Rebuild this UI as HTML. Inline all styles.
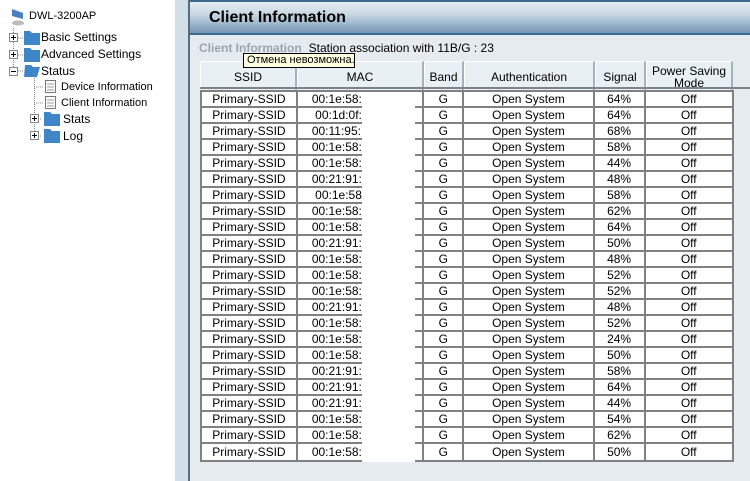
<!DOCTYPE html>
<html><head><meta charset="utf-8"><style>
*{margin:0;padding:0;box-sizing:border-box}
body{width:750px;height:481px;overflow:hidden;background:#fff;font-family:"Liberation Sans",Arial,sans-serif;position:relative}
.nav{position:absolute;left:0;top:0;width:175px;height:481px;background:#fff;font-size:12px;color:#000}
.nav div{position:absolute;white-space:nowrap}
.strip{position:absolute;left:175px;top:0;width:13px;height:481px;background:#d3dfe8}
.vline{position:absolute;left:188px;top:0;width:2px;height:481px;background:#5a6b7b}
.main{position:absolute;left:190px;top:0;width:560px;height:481px;background:#e6ebef}
.hdr{position:absolute;left:0;top:0;width:560px;height:35px;border-top:2px solid #3d6a90;border-bottom:2px solid #3d6a90;background:linear-gradient(#e6edf2,#c8d7e3 40%,#7397b7)}
.hdr span{position:absolute;left:19px;top:7px;font-size:16px;font-weight:bold;color:#000}
.sub{position:absolute;left:9px;top:41px;font-size:12px;color:#000;white-space:nowrap}
.sub b{font-weight:bold;color:#9aa6ae;margin-right:7px}
.th{position:absolute;top:61px;height:31px;background:#e8f0f4;border:1px solid #fff;border-right:2px solid #a6b1b8;border-bottom:1px solid #a6b1b8;font-size:12px;text-align:center;display:flex;align-items:center;justify-content:center;line-height:12px}
.hl{position:absolute;left:10px;top:87px;width:550px;height:2px;background:#7d8488}
table{position:absolute;left:10px;top:90px;width:534px;border-collapse:separate;border-spacing:0;background:#fff;border:2px solid #808080}
td{height:16px;font-size:12px;text-align:center;border-right:2px solid #808080;border-bottom:2px solid #808080;padding:0;line-height:13px;white-space:nowrap;overflow:hidden}
td:nth-child(2){text-align:left;padding-left:14px}
tr:last-child td{border-bottom:none}
td:last-child{border-right:none}
.wb{position:absolute;left:172px;top:92px;width:53px;height:370px;background:#fff}
.tip{position:absolute;left:243px;top:53px;width:112px;height:15px;background:#ffffe1;border:1px solid #000;font-size:11px;line-height:13px;padding-left:3px;white-space:nowrap}
</style></head><body>
<div class="nav">
<svg style="position:absolute;left:10px;top:7px" width="16" height="20"><path d="M2 2 L13 6 L13 12 L2 9Z" fill="#4a7fc0"/><ellipse cx="8" cy="16" rx="6" ry="2.5" fill="#bbb"/></svg>
<div style="left:29px;top:10px;font-size:11px">DWL-3200AP</div>
<svg style="position:absolute;left:0;top:20px" width="175" height="130">
<g stroke="#888" stroke-dasharray="1 1" fill="none"><line x1="13.5" y1="8" x2="13.5" y2="52"/><line x1="18" y1="18" x2="24" y2="18"/><line x1="18" y1="35" x2="24" y2="35"/><line x1="18" y1="51" x2="24" y2="51"/><line x1="34.5" y1="58" x2="34.5" y2="117"/><line x1="34" y1="67" x2="44" y2="67"/><line x1="34" y1="83" x2="44" y2="83"/><line x1="38" y1="99" x2="42" y2="99"/><line x1="38" y1="116" x2="42" y2="116"/></g>
<g fill="#fff" stroke="#888"><rect x="9.5" y="13.5" width="8" height="8"/><rect x="9.5" y="30.5" width="8" height="8"/><rect x="9.5" y="47.5" width="8" height="8"/><rect x="30.5" y="94.5" width="8" height="8"/><rect x="30.5" y="111.5" width="8" height="8"/></g>
<g stroke="#000"><line x1="11" y1="17.5" x2="16" y2="17.5"/><line x1="13.5" y1="15" x2="13.5" y2="20"/><line x1="11" y1="34.5" x2="16" y2="34.5"/><line x1="13.5" y1="32" x2="13.5" y2="37"/><line x1="11" y1="51.5" x2="16" y2="51.5"/><line x1="32" y1="98.5" x2="37" y2="98.5"/><line x1="34.5" y1="96" x2="34.5" y2="101"/><line x1="32" y1="115.5" x2="37" y2="115.5"/><line x1="34.5" y1="113" x2="34.5" y2="118"/></g>
<g fill="#3f86c8"><path d="M24 11h6l2 2h8v12H24z"/><path d="M24 28h6l2 2h8v12H24z"/><path d="M25 45h6l2 2h7l-3 10H24z"/><path d="M44 92h6l2 2h8v12H44z"/><path d="M44 109h6l2 2h8v12H44z"/></g>
<g fill="#fff" stroke="#777"><rect x="45.5" y="60.5" width="10" height="12"/><rect x="45.5" y="76.5" width="10" height="12"/></g>
<g stroke="#999"><line x1="47" y1="64" x2="54" y2="64"/><line x1="47" y1="67" x2="54" y2="67"/><line x1="47" y1="70" x2="54" y2="70"/><line x1="47" y1="80" x2="54" y2="80"/><line x1="47" y1="83" x2="54" y2="83"/><line x1="47" y1="86" x2="54" y2="86"/></g>
</svg>
<div style="left:41px;top:30px">Basic Settings</div>
<div style="left:41px;top:47px">Advanced Settings</div>
<div style="left:41px;top:64px">Status</div>
<div style="left:61px;top:81px;font-size:11px">Device Information</div>
<div style="left:61px;top:97px;font-size:11px">Client Information</div>
<div style="left:63px;top:112px">Stats</div>
<div style="left:63px;top:129px">Log</div>
</div>
<div class="strip"></div><div class="vline"></div>
<div class="main">
<div class="hdr"><span>Client Information</span></div>
<div class="sub"><b>Client Information</b>Station association with 11B/G : 23</div>
<div class="th" style="left:10px;width:97px">SSID</div>
<div class="th" style="left:107px;width:127px">MAC</div>
<div class="th" style="left:234px;width:40px">Band</div>
<div class="th" style="left:274px;width:131px">Authentication</div>
<div class="th" style="left:405px;width:51px">Signal</div>
<div class="th" style="left:456px;width:87px">Power Saving<br>Mode</div>
<div class="hl"></div>
<table>
<colgroup><col style="width:96px"><col style="width:127px"><col style="width:40px"><col style="width:131px"><col style="width:51px"><col style="width:87px"></colgroup>
<tr><td>Primary-SSID</td><td>00:1e:58:</td><td>G</td><td>Open System</td><td>64%</td><td>Off</td></tr>
<tr><td>Primary-SSID</td><td>&nbsp;00:1d:0f:</td><td>G</td><td>Open System</td><td>64%</td><td>Off</td></tr>
<tr><td>Primary-SSID</td><td>00:11:95:</td><td>G</td><td>Open System</td><td>68%</td><td>Off</td></tr>
<tr><td>Primary-SSID</td><td>00:1e:58:</td><td>G</td><td>Open System</td><td>58%</td><td>Off</td></tr>
<tr><td>Primary-SSID</td><td>00:1e:58:</td><td>G</td><td>Open System</td><td>44%</td><td>Off</td></tr>
<tr><td>Primary-SSID</td><td>00:21:91:</td><td>G</td><td>Open System</td><td>48%</td><td>Off</td></tr>
<tr><td>Primary-SSID</td><td>&nbsp;00:1e:58</td><td>G</td><td>Open System</td><td>58%</td><td>Off</td></tr>
<tr><td>Primary-SSID</td><td>00:1e:58:</td><td>G</td><td>Open System</td><td>62%</td><td>Off</td></tr>
<tr><td>Primary-SSID</td><td>00:1e:58:</td><td>G</td><td>Open System</td><td>64%</td><td>Off</td></tr>
<tr><td>Primary-SSID</td><td>00:21:91:</td><td>G</td><td>Open System</td><td>50%</td><td>Off</td></tr>
<tr><td>Primary-SSID</td><td>00:1e:58:</td><td>G</td><td>Open System</td><td>48%</td><td>Off</td></tr>
<tr><td>Primary-SSID</td><td>00:1e:58:</td><td>G</td><td>Open System</td><td>52%</td><td>Off</td></tr>
<tr><td>Primary-SSID</td><td>00:1e:58:</td><td>G</td><td>Open System</td><td>52%</td><td>Off</td></tr>
<tr><td>Primary-SSID</td><td>00:21:91:</td><td>G</td><td>Open System</td><td>48%</td><td>Off</td></tr>
<tr><td>Primary-SSID</td><td>00:1e:58:</td><td>G</td><td>Open System</td><td>52%</td><td>Off</td></tr>
<tr><td>Primary-SSID</td><td>00:1e:58:</td><td>G</td><td>Open System</td><td>24%</td><td>Off</td></tr>
<tr><td>Primary-SSID</td><td>00:1e:58:</td><td>G</td><td>Open System</td><td>50%</td><td>Off</td></tr>
<tr><td>Primary-SSID</td><td>00:21:91:</td><td>G</td><td>Open System</td><td>58%</td><td>Off</td></tr>
<tr><td>Primary-SSID</td><td>00:21:91:</td><td>G</td><td>Open System</td><td>64%</td><td>Off</td></tr>
<tr><td>Primary-SSID</td><td>00:21:91:</td><td>G</td><td>Open System</td><td>44%</td><td>Off</td></tr>
<tr><td>Primary-SSID</td><td>00:1e:58:</td><td>G</td><td>Open System</td><td>54%</td><td>Off</td></tr>
<tr><td>Primary-SSID</td><td>00:1e:58:</td><td>G</td><td>Open System</td><td>62%</td><td>Off</td></tr>
<tr><td>Primary-SSID</td><td>00:1e:58:</td><td>G</td><td>Open System</td><td>50%</td><td>Off</td></tr>
</table>
<div class="wb"></div>
</div>
<div class="tip">Отмена невозможна.</div>
</body></html>
